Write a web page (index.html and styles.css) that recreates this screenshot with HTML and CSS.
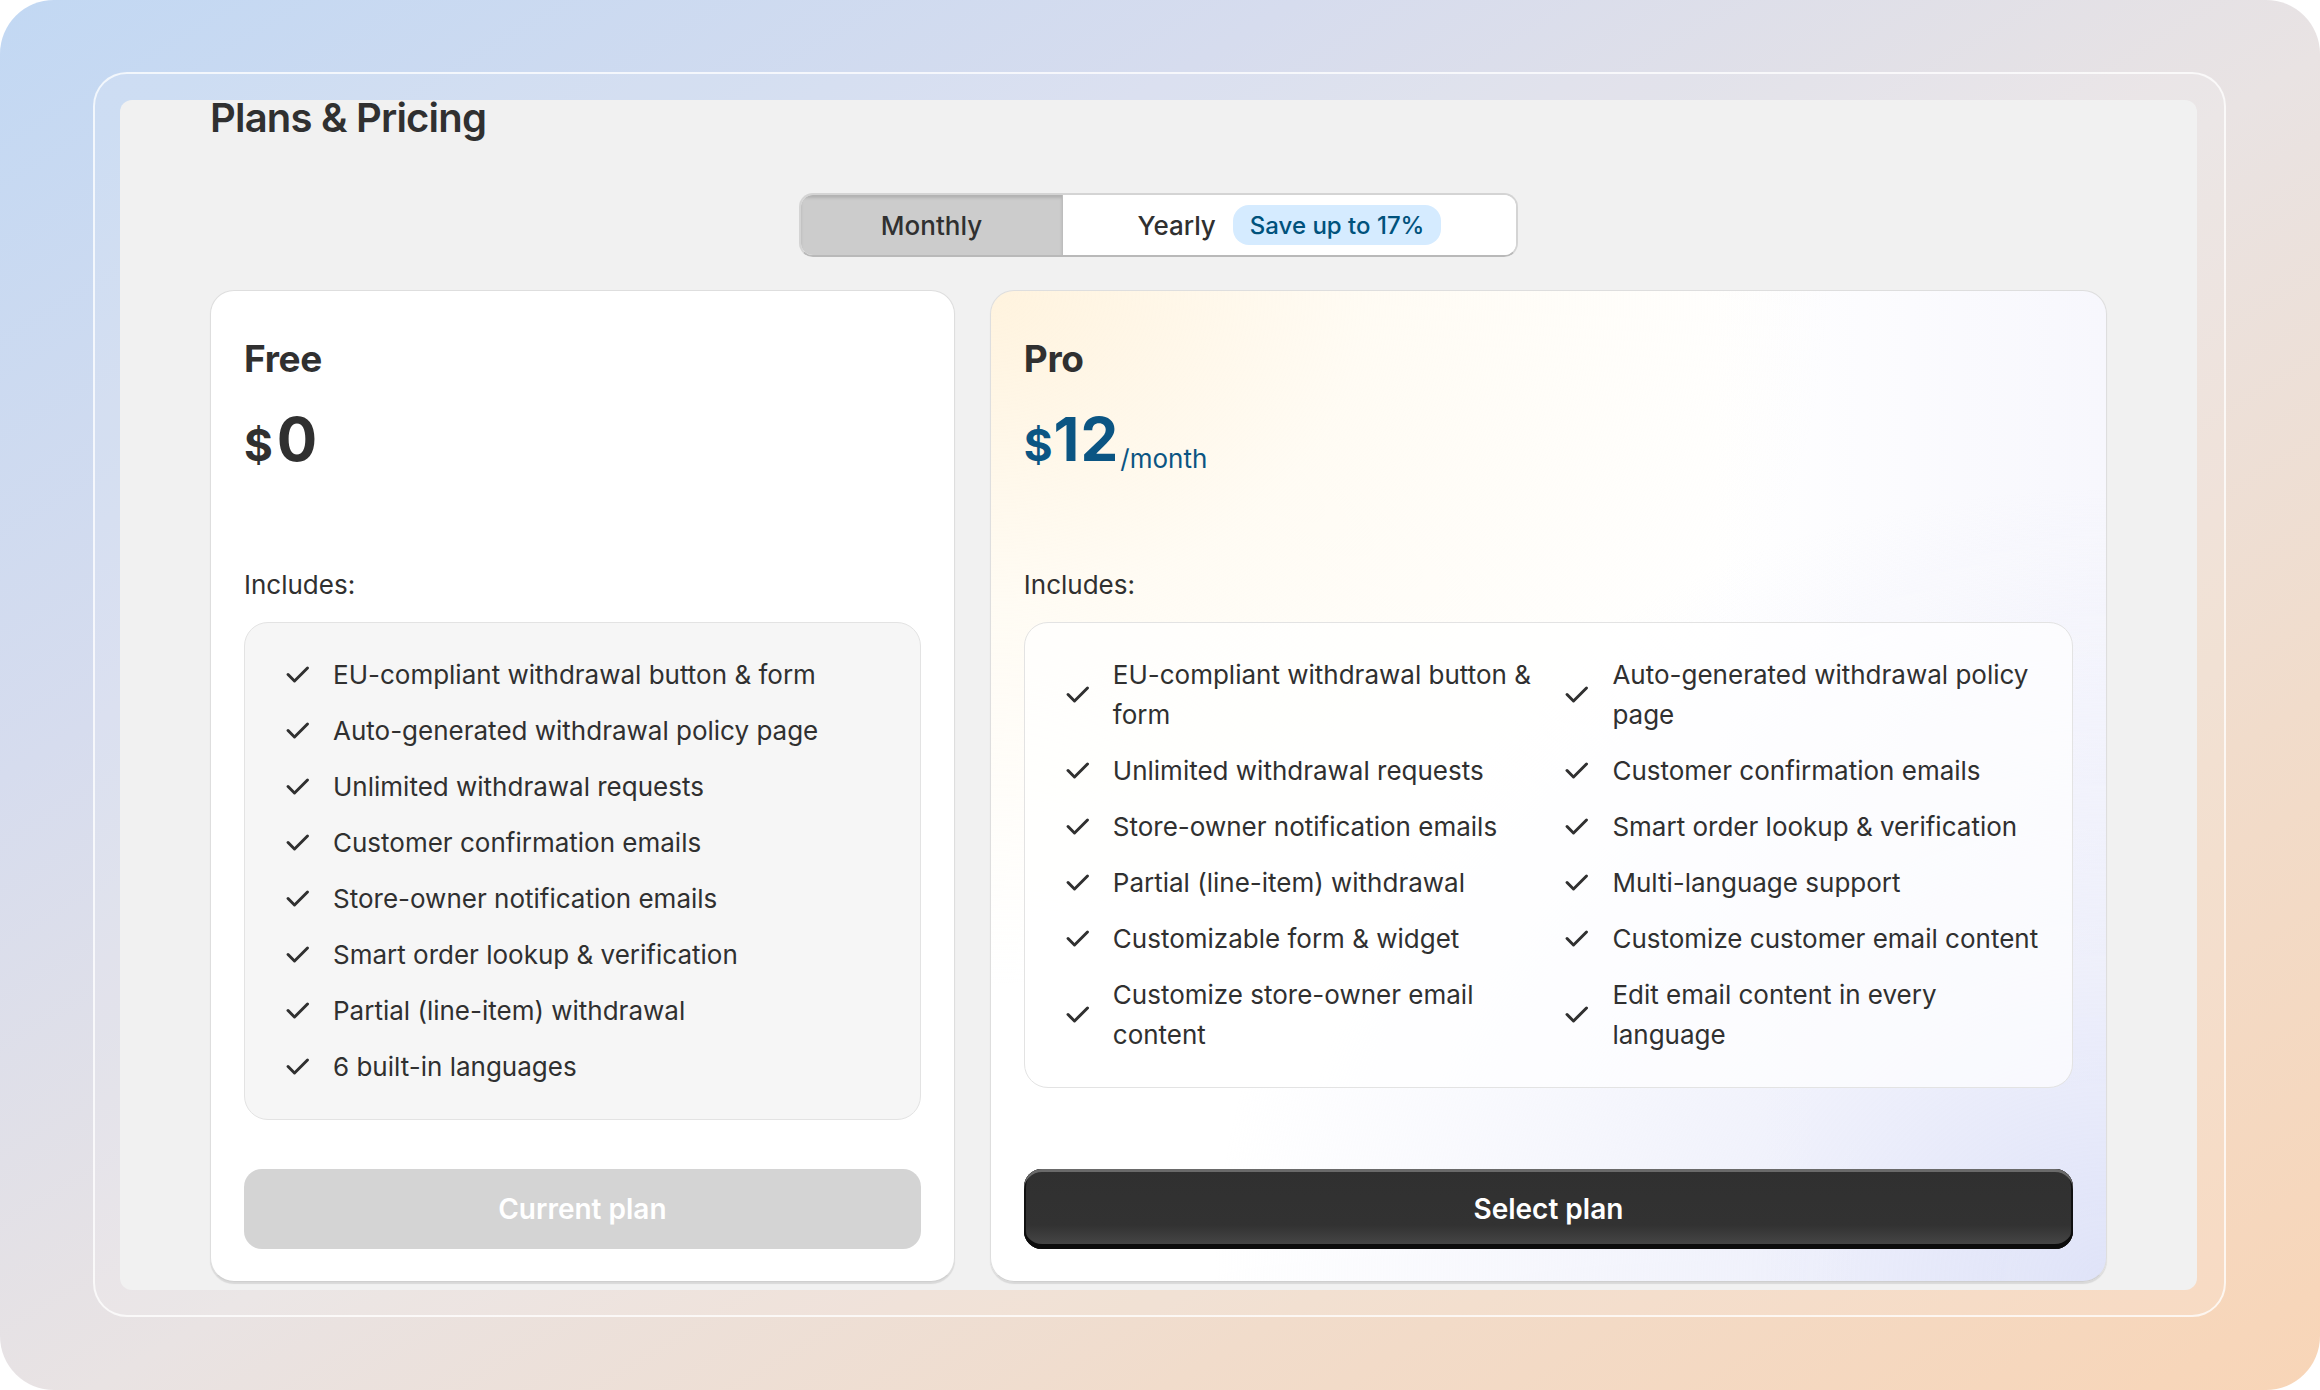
FILE: index.html
```html
<!DOCTYPE html>
<html lang="en">
<head>
<meta charset="utf-8">
<title>Plans &amp; Pricing</title>
<link rel="stylesheet" href="styles.css">
</head>
<body>
<div class="screen">
  <div class="frame">
    <main class="panel">
      <h1 class="title">Plans &amp; Pricing</h1>

      <div class="toggle-row">
        <div class="toggle">
          <button class="seg seg-active">Monthly</button>
          <button class="seg seg-yearly">Yearly <span class="badge">Save up to 17%</span></button>
        </div>
      </div>

      <div class="plans">
        <section class="card">
          <h2 class="plan-name">Free</h2>
          <div class="price"><span class="cur">$</span><span class="amount">0</span></div>
          <p class="includes">Includes:</p>
          <ul class="features">
            <li><svg class="chk" viewBox="0 0 20 20"><path d="M15.78 5.97a.75.75 0 0 1 0 1.06l-6.5 6.5a.75.75 0 0 1-1.06 0l-3.22-3.22a.75.75 0 1 1 1.06-1.06l2.69 2.69 5.97-5.970a.75.75 0 0 1 1.06 0Z"/></svg><span>EU-compliant withdrawal button &amp; form</span></li>
            <li><svg class="chk" viewBox="0 0 20 20"><path d="M15.78 5.97a.75.75 0 0 1 0 1.06l-6.5 6.5a.75.75 0 0 1-1.06 0l-3.22-3.22a.75.75 0 1 1 1.06-1.06l2.69 2.69 5.97-5.97a.75.75 0 0 1 1.06 0Z"/></svg><span>Auto-generated withdrawal policy page</span></li>
            <li><svg class="chk" viewBox="0 0 20 20"><path d="M15.78 5.97a.75.75 0 0 1 0 1.06l-6.5 6.5a.75.75 0 0 1-1.06 0l-3.22-3.22a.75.75 0 1 1 1.06-1.06l2.69 2.69 5.97-5.97a.75.75 0 0 1 1.06 0Z"/></svg><span>Unlimited withdrawal requests</span></li>
            <li><svg class="chk" viewBox="0 0 20 20"><path d="M15.78 5.97a.75.75 0 0 1 0 1.06l-6.5 6.5a.75.75 0 0 1-1.06 0l-3.22-3.22a.75.75 0 1 1 1.06-1.06l2.69 2.69 5.97-5.97a.75.75 0 0 1 1.06 0Z"/></svg><span>Customer confirmation emails</span></li>
            <li><svg class="chk" viewBox="0 0 20 20"><path d="M15.78 5.97a.75.75 0 0 1 0 1.06l-6.5 6.5a.75.75 0 0 1-1.06 0l-3.22-3.22a.75.75 0 1 1 1.06-1.06l2.69 2.69 5.97-5.97a.75.75 0 0 1 1.06 0Z"/></svg><span>Store-owner notification emails</span></li>
            <li><svg class="chk" viewBox="0 0 20 20"><path d="M15.78 5.97a.75.75 0 0 1 0 1.06l-6.5 6.5a.75.75 0 0 1-1.06 0l-3.22-3.22a.75.75 0 1 1 1.06-1.06l2.69 2.69 5.97-5.97a.75.75 0 0 1 1.06 0Z"/></svg><span>Smart order lookup &amp; verification</span></li>
            <li><svg class="chk" viewBox="0 0 20 20"><path d="M15.78 5.97a.75.75 0 0 1 0 1.06l-6.5 6.5a.75.75 0 0 1-1.06 0l-3.22-3.22a.75.75 0 1 1 1.06-1.06l2.69 2.69 5.97-5.97a.75.75 0 0 1 1.06 0Z"/></svg><span>Partial (line-item) withdrawal</span></li>
            <li><svg class="chk" viewBox="0 0 20 20"><path d="M15.78 5.97a.75.75 0 0 1 0 1.06l-6.5 6.5a.75.75 0 0 1-1.06 0l-3.22-3.22a.75.75 0 1 1 1.06-1.06l2.69 2.69 5.97-5.97a.75.75 0 0 1 1.06 0Z"/></svg><span>6 built-in languages</span></li>
          </ul>
          <button class="btn btn-disabled">Current plan</button>
        </section>

        <section class="card card-pro">
          <h2 class="plan-name">Pro</h2>
          <div class="price price-pro"><span class="cur">$</span><span class="amount">12</span><span class="per">/month</span></div>
          <p class="includes">Includes:</p>
          <ul class="features features-grid">
            <li><svg class="chk" viewBox="0 0 20 20"><path d="M15.78 5.97a.75.75 0 0 1 0 1.06l-6.5 6.5a.75.75 0 0 1-1.06 0l-3.22-3.22a.75.75 0 1 1 1.06-1.06l2.69 2.69 5.97-5.97a.75.75 0 0 1 1.06 0Z"/></svg><span>EU-compliant withdrawal button &amp; form</span></li>
            <li><svg class="chk" viewBox="0 0 20 20"><path d="M15.78 5.97a.75.75 0 0 1 0 1.06l-6.5 6.5a.75.75 0 0 1-1.06 0l-3.22-3.22a.75.75 0 1 1 1.06-1.06l2.69 2.69 5.97-5.97a.75.75 0 0 1 1.06 0Z"/></svg><span>Auto-generated withdrawal policy page</span></li>
            <li><svg class="chk" viewBox="0 0 20 20"><path d="M15.78 5.97a.75.75 0 0 1 0 1.06l-6.5 6.5a.75.75 0 0 1-1.06 0l-3.22-3.22a.75.75 0 1 1 1.06-1.06l2.69 2.69 5.97-5.97a.75.75 0 0 1 1.06 0Z"/></svg><span>Unlimited withdrawal requests</span></li>
            <li><svg class="chk" viewBox="0 0 20 20"><path d="M15.78 5.97a.75.75 0 0 1 0 1.06l-6.5 6.5a.75.75 0 0 1-1.06 0l-3.22-3.22a.75.75 0 1 1 1.06-1.06l2.69 2.69 5.97-5.97a.75.75 0 0 1 1.06 0Z"/></svg><span>Customer confirmation emails</span></li>
            <li><svg class="chk" viewBox="0 0 20 20"><path d="M15.78 5.97a.75.75 0 0 1 0 1.06l-6.5 6.5a.75.75 0 0 1-1.06 0l-3.22-3.22a.75.75 0 1 1 1.06-1.06l2.69 2.69 5.97-5.97a.75.75 0 0 1 1.06 0Z"/></svg><span>Store-owner notification emails</span></li>
            <li><svg class="chk" viewBox="0 0 20 20"><path d="M15.78 5.97a.75.75 0 0 1 0 1.06l-6.5 6.5a.75.75 0 0 1-1.06 0l-3.22-3.22a.75.75 0 1 1 1.06-1.06l2.69 2.69 5.97-5.97a.75.75 0 0 1 1.06 0Z"/></svg><span>Smart order lookup &amp; verification</span></li>
            <li><svg class="chk" viewBox="0 0 20 20"><path d="M15.78 5.97a.75.75 0 0 1 0 1.06l-6.5 6.5a.75.75 0 0 1-1.06 0l-3.22-3.22a.75.75 0 1 1 1.06-1.06l2.69 2.69 5.97-5.97a.75.75 0 0 1 1.06 0Z"/></svg><span>Partial (line-item) withdrawal</span></li>
            <li><svg class="chk" viewBox="0 0 20 20"><path d="M15.78 5.97a.75.75 0 0 1 0 1.06l-6.5 6.5a.75.75 0 0 1-1.06 0l-3.22-3.22a.75.75 0 1 1 1.06-1.06l2.69 2.69 5.97-5.97a.75.75 0 0 1 1.06 0Z"/></svg><span>Multi-language support</span></li>
            <li><svg class="chk" viewBox="0 0 20 20"><path d="M15.78 5.97a.75.75 0 0 1 0 1.06l-6.5 6.5a.75.75 0 0 1-1.06 0l-3.22-3.22a.75.75 0 1 1 1.06-1.06l2.69 2.69 5.97-5.97a.75.75 0 0 1 1.06 0Z"/></svg><span>Customizable form &amp; widget</span></li>
            <li><svg class="chk" viewBox="0 0 20 20"><path d="M15.78 5.97a.75.75 0 0 1 0 1.06l-6.5 6.5a.75.75 0 0 1-1.06 0l-3.22-3.22a.75.75 0 1 1 1.06-1.06l2.69 2.69 5.97-5.97a.75.75 0 0 1 1.06 0Z"/></svg><span>Customize customer email content</span></li>
            <li><svg class="chk" viewBox="0 0 20 20"><path d="M15.78 5.97a.75.75 0 0 1 0 1.06l-6.5 6.5a.75.75 0 0 1-1.06 0l-3.22-3.22a.75.75 0 1 1 1.06-1.06l2.69 2.69 5.97-5.97a.75.75 0 0 1 1.06 0Z"/></svg><span>Customize store-owner email content</span></li>
            <li><svg class="chk" viewBox="0 0 20 20"><path d="M15.78 5.97a.75.75 0 0 1 0 1.06l-6.5 6.5a.75.75 0 0 1-1.06 0l-3.22-3.22a.75.75 0 1 1 1.06-1.06l2.69 2.69 5.97-5.97a.75.75 0 0 1 1.06 0Z"/></svg><span>Edit email content in every language</span></li>
          </ul>
          <button class="btn btn-primary">Select plan</button>
        </section>
      </div>
    </main>
  </div>
</div>
</body>
</html>
```
FILE: styles.css
```css
* { box-sizing: border-box; }

html, body {
  margin: 0;
  padding: 0;
  background: #ffffff;
}

body {
  width: 2320px;
  height: 1390px;
  overflow: hidden;
  font-family: Inter, "Noto Sans", "Liberation Sans", sans-serif;
  color: #303030;
}

.screen {
  width: 2320px;
  height: 1390px;
  border-radius: 54px;
  background: linear-gradient(to bottom right, #c2d8f3 0%, #d6dcee 28%, #e9e3e3 52%, #f1dccb 75%, #f8d5b7 100%);
  padding: 72px 94px 73px 93px;
  display: flex;
}

.frame {
  flex: 1;
  display: flex;
  border: 2px solid rgba(255, 255, 255, 0.75);
  border-radius: 34px;
  background: rgba(255, 255, 255, 0.12);
  padding: 26px 27px 25px 25px;
}

.panel {
  flex: 1;
  background: #f1f1f1;
  border-radius: 12px;
  padding: 0 90px;
}

.title {
  margin: 0;
  font-size: 40px;
  line-height: 34px;
  padding-top: 1px;
  font-weight: 600;
  letter-spacing: -0.8px;
  color: #303030;
}

.toggle-row {
  display: flex;
  justify-content: center;
  margin-top: 58px;
}

.toggle {
  display: flex;
  width: 719px;
  height: 64px;
  border-radius: 14px;
  overflow: hidden;
  border: 2px solid #d4d4d4;
  border-bottom-color: #b9b9b9;
  background: #ffffff;
}

.seg {
  border: 0;
  margin: 0;
  padding: 0;
  font-family: inherit;
  font-size: 26px;
  font-weight: 450;
  color: #303030;
  display: flex;
  align-items: center;
  justify-content: center;
  background: #ffffff;
}

.seg-active {
  width: 262px;
  background: #cccccc;
  box-shadow: inset 0 3px 3px rgba(0, 0, 0, 0.13);
  border-right: 1px solid #bdbdbd;
}

.seg-yearly {
  flex: 1;
  gap: 17px;
}

.badge {
  display: inline-flex;
  align-items: center;
  height: 40px;
  padding: 0 17px;
  border-radius: 16px;
  background: #d5ebff;
  color: #00527c;
  font-size: 24px;
  font-weight: 450;
}

.plans {
  display: grid;
  grid-template-columns: 2fr 3fr;
  gap: 35px;
  margin-top: 33px;
}

.card {
  display: flex;
  flex-direction: column;
  background: #ffffff;
  border: 1px solid #dedede;
  border-bottom-color: #cfcfcf;
  border-radius: 24px;
  box-shadow: 0 2px 1px rgba(0, 0, 0, 0.10);
  padding: 44px 33px 32px;
}

.card-pro {
  background:
    radial-gradient(ellipse 75% 70% at 0% 0%, rgba(255, 243, 222, 1) 0%, rgba(255, 249, 236, 0.6) 45%, rgba(255, 255, 255, 0) 100%),
    radial-gradient(ellipse 80% 80% at 100% 100%, rgba(223, 227, 248, 1) 0%, rgba(234, 236, 250, 0.7) 40%, rgba(255, 255, 255, 0) 100%),
    linear-gradient(to right, #ffffff 65%, #f7f7fd 100%);
}

.plan-name {
  margin: 0;
  font-size: 37px;
  line-height: 48px;
  font-weight: 650;
  letter-spacing: -0.3px;
}

.price {
  margin-top: 21px;
  height: 70px;
  line-height: 70px;
  white-space: nowrap;
  color: #303030;
  font-weight: 700;
}

.price .cur {
  font-size: 44px;
  margin-right: 4px;
}

.price .amount {
  font-size: 60px;
  letter-spacing: 1px;
}

.price-pro {
  color: #0b5583;
}

.price-pro .cur {
  margin-right: 1px;
}

.price .per {
  font-size: 26px;
  font-weight: 400;
  vertical-align: -7px;
  margin-left: 1px;
  letter-spacing: 0;
}

.includes {
  margin: 91px 0 0;
  font-size: 26px;
  line-height: 40px;
}

.features {
  list-style: none;
  margin: 17px 0 49px;
  padding: 32px;
  border: 1px solid #e3e3e3;
  border-radius: 24px;
  background: #f6f6f6;
  display: flex;
  flex-direction: column;
  gap: 16px;
}

.card-pro .features {
  background: rgba(255, 255, 255, 0.7);
}

.features-grid {
  display: grid;
  grid-template-columns: 1fr 1fr;
  column-gap: 16px;
  row-gap: 16px;
}

.features li {
  display: flex;
  align-items: center;
  gap: 16px;
  font-size: 26px;
  line-height: 40px;
  color: #303030;
}

.chk {
  flex: 0 0 40px;
  width: 40px;
  height: 40px;
  fill: #303030;
}

.btn {
  margin-top: auto;
  height: 80px;
  width: 100%;
  flex-shrink: 0;
  border-radius: 18px;
  font-family: inherit;
  font-size: 28px;
  font-weight: 600;
  color: #ffffff;
  border: 0;
}

.btn-disabled {
  background: #d4d4d4;
}

.btn-primary {
  background: linear-gradient(to bottom, #303030 0%, #323232 70%, #4a4a4a 100%);
  box-shadow:
    inset 0 3px 0 #6a6a6a,
    inset 0 -5px 0 #0c0c0c,
    inset 2px 0 0 #111111,
    inset -2px 0 0 #111111;
}
```
